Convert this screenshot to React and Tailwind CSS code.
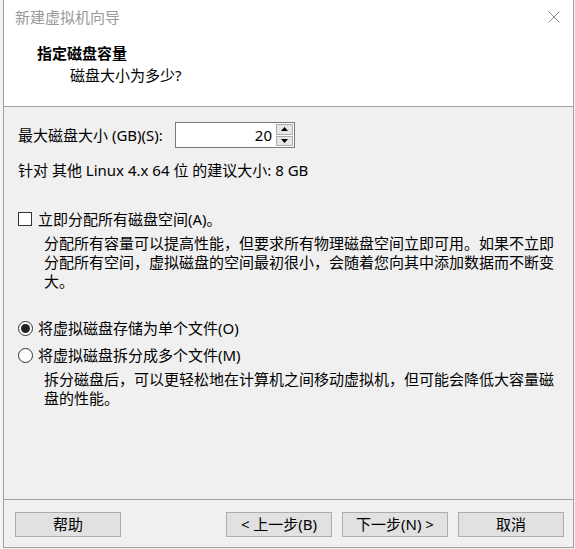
import React from "react";

const font = { fontFamily: '"Noto Sans", "Noto Sans CJK SC", sans-serif' };

function Btn({ children, className = "" }) {
  return (
    <div
      className={
        "h-[25px] w-[106px] flex items-center justify-center border border-[#adadad] bg-[#e1e1e1] text-[15px] text-[#000] " +
        className
      }
    >
      {children}
    </div>
  );
}

export default function App() {
  return (
    <div
      className="w-[575px] h-[549px] bg-[#f3f3f3] pl-[3px] pr-[1px] pb-[1px] overflow-hidden"
      style={font}
    >
      <div className="h-full flex flex-col border-l border-r border-b border-[#a0a0a0] bg-[#f0f0f0]">
        {/* header */}
        <div className="h-[107px] bg-white border-b border-[#a0a0a0] flex flex-col">
          <div className="h-[34px] flex items-center justify-between pl-[11px] pr-[13px]">
            <span className="text-[15px] leading-[20px] text-[#999999]">新建虚拟机向导</span>
            <svg width="12" height="12" viewBox="0 0 12 12">
              <path d="M0.5 0.5 L11.5 11.5 M11.5 0.5 L0.5 11.5" stroke="#8a8a8a" strokeWidth="1" fill="none" />
            </svg>
          </div>
          <div className="mt-[9px] pl-[33px] text-[15px] leading-[20px] font-bold text-black">指定磁盘容量</div>
          <div className="mt-[2px] pl-[66px] text-[15px] leading-[20px] text-black">磁盘大小为多少?</div>
        </div>

        {/* content */}
        <div className="flex-1 flex flex-col pl-[14px] text-[15px] text-black">
          <div className="mt-[15px] flex items-center h-[26px]">
            <span className="leading-[20px] w-[157px]">最大磁盘大小 (GB)(S):</span>
            <div className="h-[26px] w-[100px] bg-white border border-[#7a7a7a] border-r-0 flex items-center justify-end pr-[3px] leading-[20px]">
              20
            </div>
            <div className="h-[26px] w-[20px] flex flex-col border border-[#7a7a7a] border-l-0 bg-white p-[1px] gap-[1px]">
              <div className="flex-1 bg-[#e6e6e6] border border-[#adadad] flex items-center justify-center">
                <svg width="7" height="4" viewBox="0 0 7 4"><path d="M3.5 0 L7 4 L0 4 Z" fill="#000" /></svg>
              </div>
              <div className="flex-1 bg-[#e6e6e6] border border-[#adadad] flex items-center justify-center">
                <svg width="7" height="4" viewBox="0 0 7 4"><path d="M0 0 L7 0 L3.5 4 Z" fill="#000" /></svg>
              </div>
            </div>
          </div>

          <div className="mt-[12px] leading-[20px]">针对 其他 Linux 4.x 64 位 的建议大小: 8 GB</div>

          <div className="mt-[29px] flex items-center leading-[20px]">
            <div className="w-[14px] h-[14px] border border-[#333333] bg-white mr-[6px]" />
            <span>立即分配所有磁盘空间(A)。</span>
          </div>
          <div className="mt-[5px] pl-[26px] pr-[14px] leading-[19px]">
            分配所有容量可以提高性能，但要求所有物理磁盘空间立即可用。如果不立即分配所有空间，虚拟磁盘的空间最初很小，会随着您向其中添加数据而不断变大。
          </div>

          <div className="mt-[27px] flex items-center leading-[20px]">
            <div className="w-[15px] h-[15px] rounded-full border border-[#333333] bg-white mr-[5px] flex items-center justify-center">
              <div className="w-[9px] h-[9px] rounded-full bg-[#222222]" />
            </div>
            <span>将虚拟磁盘存储为单个文件(O)</span>
          </div>
          <div className="mt-[7px] flex items-center leading-[20px]">
            <div className="w-[15px] h-[15px] rounded-full border border-[#333333] bg-white mr-[5px]" />
            <span>将虚拟磁盘拆分成多个文件(M)</span>
          </div>
          <div className="mt-[5px] pl-[26px] pr-[14px] leading-[19px]">
            拆分磁盘后，可以更轻松地在计算机之间移动虚拟机，但可能会降低大容量磁盘的性能。
          </div>
        </div>

        {/* footer */}
        <div className="h-[48px] border-t border-[#a0a0a0] flex items-start pt-[12px] pl-[11px] pr-[9px]">
          <Btn>帮助</Btn>
          <div className="flex-1" />
          <Btn>&lt; 上一步(B)</Btn>
          <Btn className="ml-[10px]">下一步(N) &gt;</Btn>
          <Btn className="ml-[10px]">取消</Btn>
        </div>
      </div>
    </div>
  );
}
